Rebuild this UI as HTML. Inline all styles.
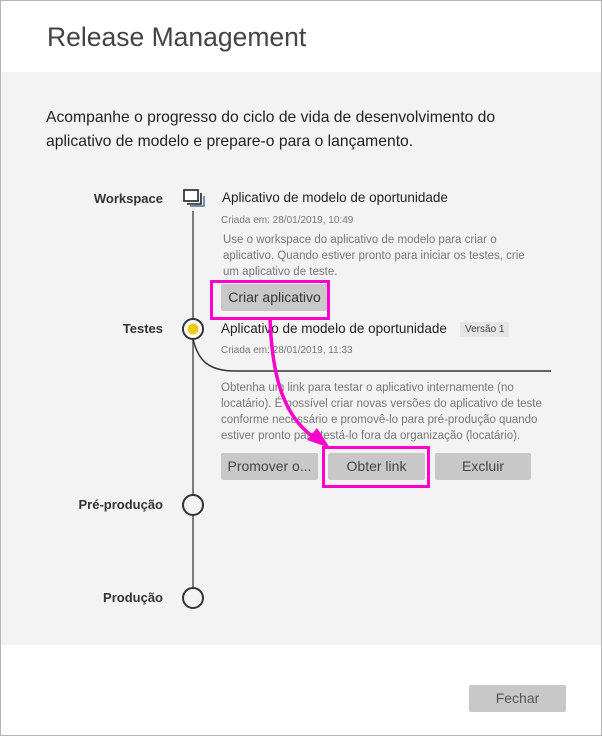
<!DOCTYPE html>
<html><head><meta charset="utf-8"><style>
*{margin:0;padding:0;box-sizing:border-box}
body{width:602px;height:736px;position:relative;background:#fff;font-family:"Liberation Sans","DejaVu Sans",sans-serif;overflow:hidden}
.frame{position:absolute;left:0;top:0;width:602px;height:736px;border:1px solid #b4b4b4}
.gray{position:absolute;left:1px;top:72px;width:600px;height:573px;background:#f3f3f3}
.a{position:absolute;white-space:nowrap}
.btn{position:absolute;background:#c8c8c8;border-radius:2px;color:#444;font-size:14px;text-align:center;line-height:27px;height:27px}
.lbl{position:absolute;font-size:13px;font-weight:bold;color:#333;text-align:right;width:100px;left:63px}
.t{font-size:13.5px;color:#222}
.s{font-size:10px;color:#777}
.d{font-size:11.5px;color:#777;line-height:16px}
.mag{position:absolute;border:3px solid #ff00cc}
</style></head><body>
<div class="gray"></div>
<div class="frame"></div>
<div class="a" style="left:47px;top:22px;font-size:26.5px;color:#444;">Release Management</div>
<div class="a" style="left:46px;top:106px;font-size:15.7px;color:#222;line-height:24px">Acompanhe o progresso do ciclo de vida de desenvolvimento do<br>aplicativo de modelo e prepare-o para o lançamento.</div>

<div class="lbl" style="top:191px">Workspace</div>
<div class="lbl" style="top:321px">Testes</div>
<div class="lbl" style="top:497px">Pré-produção</div>
<div class="lbl" style="top:590px">Produção</div>

<svg class="a" style="left:0;top:0" width="602" height="736">
<line x1="193" y1="211" x2="193" y2="588" stroke="#555" stroke-width="1.5"/>
<rect x="184" y="190" width="14" height="11" fill="#fff" stroke="#222" stroke-width="1.6"/>
<path d="M187 204 H201 V193" fill="none" stroke="#222" stroke-width="1.6"/>
<path d="M190 206 H204 V196" fill="none" stroke="#4a6f95" stroke-width="1.5"/>
<path d="M193 339 C198 360 208 371 235 371 H551" fill="none" stroke="#333" stroke-width="1.5"/>
<circle cx="193" cy="329" r="10" fill="#fff" stroke="#333" stroke-width="2"/>
<circle cx="193" cy="329" r="5.5" fill="#f2c811"/>
<circle cx="193" cy="505" r="10" fill="#f3f3f3" stroke="#333" stroke-width="2"/>
<circle cx="193" cy="598" r="10" fill="#f3f3f3" stroke="#333" stroke-width="2"/>
</svg>

<div class="a t" style="left:222px;top:190px">Aplicativo de modelo de oportunidade</div>
<div class="a s" style="left:221px;top:215px">Criada em: 28/01/2019, 10:49</div>
<div class="a d" style="left:223px;top:232px">Use o workspace do aplicativo de modelo para criar o<br>aplicativo. Quando estiver pronto para iniciar os testes, crie<br>um aplicativo de teste.</div>
<div class="btn" style="left:221px;top:284px;width:107px;color:#333">Criar aplicativo</div>

<div class="a t" style="left:221px;top:321px">Aplicativo de modelo de oportunidade</div>
<div class="a" style="left:460px;top:322px;background:#e6e6e6;font-size:10px;color:#444;padding:2px 5px">Versão 1</div>
<div class="a s" style="left:221px;top:345px">Criada em: 28/01/2019, 11:33</div>
<div class="a d" style="left:221px;top:380px">Obtenha um link para testar o aplicativo internamente (no<br>locatário). É possível criar novas versões do aplicativo de teste<br>conforme necessário e promovê-lo para pré-produção quando<br>estiver pronto para testá-lo fora da organização (locatário).</div>
<div class="btn" style="left:221px;top:453px;width:97px">Promover o...</div>
<div class="btn" style="left:328px;top:453px;width:97px">Obter link</div>
<div class="btn" style="left:435px;top:453px;width:96px">Excluir</div>
<div class="btn" style="left:469px;top:685px;width:97px;color:#555">Fechar</div>

<div class="mag" style="left:210px;top:280px;width:120px;height:40px"></div>
<div class="mag" style="left:322px;top:446px;width:108px;height:42px"></div>
<svg class="a" style="left:0;top:0" width="602" height="736">
<path d="M270 318 C272 380 285 420 318 440" fill="none" stroke="#ff00cc" stroke-width="3.5"/>
<path d="M307 440 L330 448 L317 428 Z" fill="#ff00cc"/>
</svg>
</body></html>
